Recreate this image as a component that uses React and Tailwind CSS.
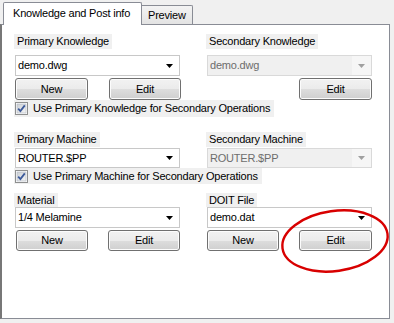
import React from "react";

function Label({ children }) {
  return (
    <div className="flex h-full">
      <div className="h-full bg-[#f0f0f0] px-[3px] flex items-center whitespace-nowrap">{children}</div>
    </div>
  );
}

function Combo({ text, disabled }) {
  if (disabled) {
    return (
      <div className="ml-[1px] w-[165px] h-full border border-[#d9d9d9] bg-[#f0f0f0] flex items-center text-[#6d6d6d]">
        <div className="flex-1 pl-[2px]">{text}</div>
        <div className="w-[19px] h-full bg-[#f6f6f6] flex items-center justify-center">
          <svg width="7" height="4" viewBox="0 0 7 4"><path d="M0 0H7L3.5 4Z" fill="#a0a0a0" /></svg>
        </div>
      </div>
    );
  }
  return (
    <div className="ml-[1px] w-[165px] h-full border border-[#c8c8c8] bg-white flex items-center">
      <div className="flex-1 pl-[2px]">{text}</div>
      <div className="w-[19px] h-full flex items-center justify-center">
        <svg width="7" height="4" viewBox="0 0 7 4"><path d="M0 0H7L3.5 4Z" fill="#000" /></svg>
      </div>
    </div>
  );
}

function Btn({ children, w }) {
  return (
    <div
      className={`${w} h-full border border-[#707070] rounded-[3px] flex items-center justify-center bg-[linear-gradient(to_bottom,#f2f2f2_0%,#ebebeb_50%,#dddddd_51%,#cfcfcf_100%)] shadow-[inset_0_0_0_1px_#fcfcfc]`}
    >
      {children}
    </div>
  );
}

function Check({ text }) {
  return (
    <div className="flex h-full">
      <div className="h-full bg-[#f0f0f0] flex items-center pl-[1px] pr-[4px] gap-[5px] whitespace-nowrap">
        <svg width="13" height="13" viewBox="0 0 13 13">
          <defs>
            <linearGradient id="cbg" x1="0" y1="0" x2="1" y2="1">
              <stop offset="0" stopColor="#cbcfd5" />
              <stop offset="1" stopColor="#f6f6f6" />
            </linearGradient>
          </defs>
          <rect x="0.5" y="0.5" width="12" height="12" fill="#fff" stroke="#8e8f8f" />
          <rect x="2" y="2" width="9" height="9" fill="url(#cbg)" stroke="#b0b6c0" strokeWidth="0.6" />
          <path d="M3.2 6.6 L5.4 9 L9.8 3.4" fill="none" stroke="#3c5a9a" strokeWidth="1.8" />
        </svg>
        <span>{text}</span>
      </div>
    </div>
  );
}

export default function App() {
  return (
    <div className="relative w-[394px] h-[323px] bg-[#f0f0f0] overflow-hidden text-[11px] tracking-[-0.2px] text-black font-['Liberation_Sans',Arial,sans-serif] leading-none">
      {/* tabs */}
      <div className="h-[24px] flex items-end pl-[3px]">
        <div className="relative z-10 -mb-px h-[23px] w-[139px] bg-white border border-b-0 border-[#898c95] rounded-t-[2px] flex items-center pl-[9px] pb-[1px]">
          Knowledge and Post info
        </div>
        <div className="h-[19px] w-[51px] border border-l-0 border-b-0 border-[#898c95] rounded-tr-[2px] bg-[linear-gradient(to_bottom,#f3f3f3,#e3e3e3)] flex items-center pl-[6px]">
          Preview
        </div>
      </div>
      {/* panel */}
      <div className="w-[390px] h-[295px] bg-white border border-[#898c95] border-l-2 border-l-[#777777] pl-[12px] pt-[9px]">
        <div className="grid grid-cols-[168px_166px] gap-x-[24px]">
          {/* section 1 labels */}
          <div className="h-[15px]"><Label>Primary Knowledge</Label></div>
          <div className="h-[15px]"><Label>Secondary Knowledge</Label></div>
          <div className="mt-[6px] h-[21px]"><Combo text="demo.dwg" /></div>
          <div className="mt-[6px] h-[21px]"><Combo text="demo.dwg" disabled /></div>
          <div className="mt-[2px] h-[22px] flex justify-between px-[1px]">
            <Btn w="w-[73px]">New</Btn>
            <Btn w="w-[72px]">Edit</Btn>
          </div>
          <div className="mt-[2px] h-[22px] flex justify-end">
            <Btn w="w-[73px]">Edit</Btn>
          </div>
          <div className="col-span-2 h-[17px]">
            <Check text="Use Primary Knowledge for Secondary Operations" />
          </div>
          {/* section 2 */}
          <div className="mt-[15px] h-[15px]"><Label>Primary Machine</Label></div>
          <div className="mt-[15px] h-[15px]"><Label>Secondary Machine</Label></div>
          <div className="mt-[1px] h-[20px]"><Combo text="ROUTER.$PP" /></div>
          <div className="mt-[1px] h-[20px]"><Combo text="ROUTER.$PP" disabled /></div>
          <div className="col-span-2 h-[16px]">
            <Check text="Use Primary Machine for Secondary Operations" />
          </div>
          {/* section 3 */}
          <div className="mt-[9px] h-[14px]"><Label>Material</Label></div>
          <div className="mt-[9px] h-[14px]"><Label>DOIT File</Label></div>
          <div className="h-[21px]"><Combo text="1/4 Melamine" /></div>
          <div className="h-[21px]"><Combo text="demo.dat" /></div>
          <div className="mt-[2px] h-[21px] flex justify-between px-[2px]">
            <Btn w="w-[72px]">New</Btn>
            <Btn w="w-[72px]">Edit</Btn>
          </div>
          <div className="mt-[2px] h-[21px] flex justify-between pl-[1px]">
            <Btn w="w-[72px]">New</Btn>
            <Btn w="w-[73px]">Edit</Btn>
          </div>
        </div>
      </div>
      {/* red annotation ellipse */}
      <svg className="absolute left-0 top-0 pointer-events-none" width="394" height="323" viewBox="0 0 394 323">
        <ellipse cx="335" cy="241" rx="53" ry="30" transform="rotate(-8 335 241)" fill="none" stroke="#d80000" strokeWidth="2.4" />
      </svg>
    </div>
  );
}
